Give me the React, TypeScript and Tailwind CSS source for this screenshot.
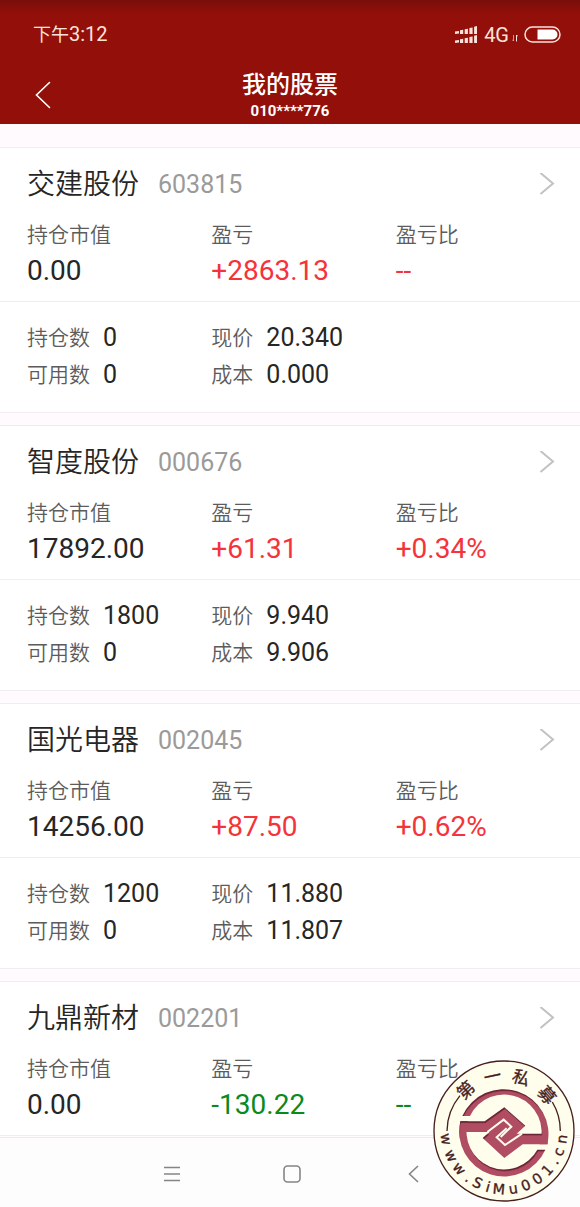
import React from "react";

type Tone = "up" | "down";

interface Stock {
  name: string;
  code: string;
  marketValue: string;
  profit: string;
  ratio: string;
  tone: Tone;
  details?: { held: string; available: string; price: string; cost: string };
}

const stocks: Stock[] = [
  {
    name: "交建股份",
    code: "603815",
    marketValue: "0.00",
    profit: "+2863.13",
    ratio: "--",
    tone: "up",
    details: { held: "0", available: "0", price: "20.340", cost: "0.000" },
  },
  {
    name: "智度股份",
    code: "000676",
    marketValue: "17892.00",
    profit: "+61.31",
    ratio: "+0.34%",
    tone: "up",
    details: { held: "1800", available: "0", price: "9.940", cost: "9.906" },
  },
  {
    name: "国光电器",
    code: "002045",
    marketValue: "14256.00",
    profit: "+87.50",
    ratio: "+0.62%",
    tone: "up",
    details: { held: "1200", available: "0", price: "11.880", cost: "11.807" },
  },
  {
    name: "九鼎新材",
    code: "002201",
    marketValue: "0.00",
    profit: "-130.22",
    ratio: "--",
    tone: "down",
  },
];

const toneClass: Record<Tone, string> = {
  up: "text-[#f5333a]",
  down: "text-[#0a8a1e]",
};

function StatusBar() {
  return (
    <div className="flex h-[69px] items-center justify-between bg-linear-to-b from-[#780e0b] to-[#930f09] to-20% pr-[19px] pl-[33px] text-[#fbe3dc]">
      <span className="text-[20px] leading-6">
        <span className="text-[18px]">下午</span>3:12
      </span>
      <div className="flex items-center">
        <svg className="h-[18px] w-[22px]" viewBox="0 0 22 18" fill="currentColor" aria-hidden="true">
          {[0, 9].map((y) => (
            <path
              key={y}
              transform={`translate(0 ${y})`}
              d="M0 5.600 4 5v2.400l-4 .6zM5 4.200l3.200-.4V8H5zM9.700 3.200l3.200-.5V8h-3.200zM14.400 2l3.200-.5V8h-3.200zM19.100.8 22 0v8h-2.900z"
            />
          ))}
        </svg>
        <span className="ml-[7px] text-[20px] leading-6">4G</span>
        <svg className="mt-[7px] ml-[3px] h-2 w-[6px]" viewBox="0 0 6 8" fill="none" stroke="currentColor" aria-hidden="true">
          <path d="M1.500 1v6L0 5.500" opacity=".6" />
          <path d="M4.500 7.500V1L6 2.500" />
        </svg>
        <svg className="ml-[6px] h-[17px] w-[37px]" viewBox="0 0 37 17" aria-hidden="true">
          <rect x="1" y="1" width="35" height="15" rx="7.500" fill="none" stroke="currentColor" strokeWidth="1.500" />
          <path d="M13.500 3.500h15a5 5 0 0 1 0 10h-15z" fill="#fff" />
        </svg>
      </div>
    </div>
  );
}

function Header() {
  return (
    <header className="bg-[#930f09] pb-[3px] text-white">
      <StatusBar />
      <div className="grid grid-cols-[80px_1fr_80px] items-center">
        <button type="button" aria-label="返回" className="flex justify-start pl-[35px]">
          <svg className="h-7 w-4" viewBox="0 0 16 28" fill="none" stroke="currentColor" strokeWidth="1.600" strokeLinecap="round">
            <path d="M14.500 1.500 1.500 14l13 12.500" />
          </svg>
        </button>
        <div className="text-center">
          <h1 className="text-[24px] leading-8 font-medium">我的股票</h1>
          <p className="text-[15px] leading-5 font-bold">010****776</p>
        </div>
      </div>
    </header>
  );
}

function Figure({ label, value, className }: { label: string; value: string; className: string }) {
  return (
    <div>
      <dt className="text-[21px] leading-7 font-[350] text-[#5c5c5c]">{label}</dt>
      <dd className={`mt-1 text-[28px] leading-9 ${className}`}>{value}</dd>
    </div>
  );
}

function Detail({ label, value }: { label: string; value: string }) {
  return (
    <div className="flex h-[37px] items-center gap-[13px]">
      <dt className="text-[21px] leading-7 font-[350] text-[#5c5c5c]">{label}</dt>
      <dd className="text-[25px] leading-7 text-[#262626]">{value}</dd>
    </div>
  );
}

function StockCard({ stock }: { stock: Stock }) {
  const { details } = stock;
  return (
    <section className="border-y border-[#efedf0] bg-white">
      <div className="pt-[17px] pb-3 pl-[27px]">
        <div className="flex h-10 items-center">
          <h2 className="text-[28px] leading-10 font-[350] text-[#262626]">{stock.name}</h2>
          <span className="ml-[19px] text-[25px] leading-10 text-[#9a9a9a]">{stock.code}</span>
          <a href={`#${stock.code}`} aria-label={`${stock.name}详情`} className="mr-[25px] ml-auto">
            <svg className="h-6 w-4" viewBox="0 0 16 24" fill="none" stroke="#c2c2c2" strokeWidth="2">
              <path d="M1.500 0 14 10.500 1.500 21" />
            </svg>
          </a>
        </div>
        <dl className="mt-4 grid grid-cols-3">
          <Figure label="持仓市值" value={stock.marketValue} className="text-[#262626]" />
          <Figure label="盈亏" value={stock.profit} className={toneClass[stock.tone]} />
          <Figure label="盈亏比" value={stock.ratio} className={toneClass[stock.tone]} />
        </dl>
      </div>
      {details && (
        <dl className="grid grid-cols-3 border-t border-[#efedf0] pt-[17px] pb-[19px] pl-[27px]">
          <Detail label="持仓数" value={details.held} />
          <Detail label="现价" value={details.price} />
          <div />
          <Detail label="可用数" value={details.available} />
          <Detail label="成本" value={details.cost} />
        </dl>
      )}
    </section>
  );
}

function NavBar() {
  return (
    <nav className="grid h-[70px] shrink-0 grid-cols-[120px_120px_120px] justify-center border-t border-[#eeecee] bg-[#fdfdfd] pt-[3px] pl-1 text-[#858585]">
      <button type="button" aria-label="菜单" className="flex items-center justify-center">
        <svg className="h-5 w-5" viewBox="0 0 20 20" fill="none" stroke="currentColor" strokeWidth="1.500">
          <path d="M2 3.500h16M2 10h16M2 16.500h16" />
        </svg>
      </button>
      <button type="button" aria-label="主页" className="flex items-center justify-center">
        <svg className="h-5 w-5" viewBox="0 0 20 20" fill="none" stroke="currentColor" strokeWidth="1.600">
          <rect x="2" y="2" width="16" height="16" rx="3.500" />
        </svg>
      </button>
      <button type="button" aria-label="后退" className="flex items-center justify-center">
        <svg className="h-5 w-5" viewBox="0 0 20 20" fill="none" stroke="currentColor" strokeWidth="1.600">
          <path d="M16 2 7.500 10l8.500 8" />
        </svg>
      </button>
    </nav>
  );
}

const sealTop: [string, number][] = [
  ["第", -43],
  ["一", -12],
  ["私", 18],
  ["募", 50],
];

const sealBottom: [string, number][] = [
  ["w", 82],
  ["w", 65],
  ["w", 50],
  [".", 37],
  ["S", 27],
  ["i", 16],
  ["M", 5],
  ["u", -9],
  ["0", -22],
  ["0", -35],
  ["1", -48],
  [".", -59],
  ["c", -69],
  ["n", -82],
];

function EmblemShape() {
  return (
    <>
      <path d="M-125-49A135 135 0 0 1 130 36H107A113 113 0 0 0-102-49Z" />
      <path d="M124 52A135 135 0 0 1-131-33H-108A113 113 0 0 0 100 52Z" />
      <path d="M-131-33H-58L1-75 64-20 38 4H131V36H56L1 77-64 17-44-1H-131Z" />
    </>
  );
}

function Seal() {
  return (
    <svg className="h-[142px] w-[142px]" viewBox="-213 -213 426 426" role="img" aria-label="第一私募">
      <defs>
        <mask id="emblem" maskUnits="userSpaceOnUse" x="-150" y="-150" width="300" height="300">
          <g fill="#fff">
            <EmblemShape />
          </g>
        </mask>
      </defs>
      <circle r="210" fill="#fffdec" stroke="#45201d" strokeWidth="4" />
      <g fill="none" stroke="#45201d" strokeWidth="4">
        <path d="M-171 0A169 169 0 0 1-132-106" />
        <path d="M169 0A169 169 0 0 0 145-87" />
      </g>
      <g transform="translate(0 4)">
        <g mask="url(#emblem)">
          <rect x="-150" y="-150" width="300" height="300" fill="#6b2436" />
          <g transform="translate(2 6)" fill="#b04d62" stroke="#b04d62" strokeWidth="2">
            <EmblemShape />
          </g>
        </g>
        <g fill="none" stroke="#fffdec" strokeWidth="6">
          <path d="M-50-1-1-38 22-17-10 14" />
          <path d="M54 4 3 38-22 15 8-12" />
        </g>
      </g>
      <g fill="#45201d" stroke="#45201d" strokeWidth="1" textAnchor="middle">
        {sealTop.map(([char, angle]) => (
          <text key={char} transform={`rotate(${angle})`} y="-149" fontSize="52" fontFamily="'Noto Sans CJK SC', sans-serif">
            {char}
          </text>
        ))}
        {sealBottom.map(([char, angle]) => (
          <text key={angle} transform={`rotate(${angle})`} y="190" fontSize="43" fontFamily="'DejaVu Sans', sans-serif">
            {char}
          </text>
        ))}
      </g>
    </svg>
  );
}

export default function App() {
  return (
    <div className="relative flex min-h-screen flex-col bg-[#fefafe] font-['Roboto','Noto_Sans_CJK_SC',sans-serif]">
      <Header />
      <main className="flex grow flex-col gap-3 pt-[23px]">
        {stocks.map((stock) => (
          <StockCard key={stock.code} stock={stock} />
        ))}
      </main>
      <NavBar />
      <div className="absolute right-[5px] bottom-[5px]">
        <Seal />
      </div>
    </div>
  );
}
